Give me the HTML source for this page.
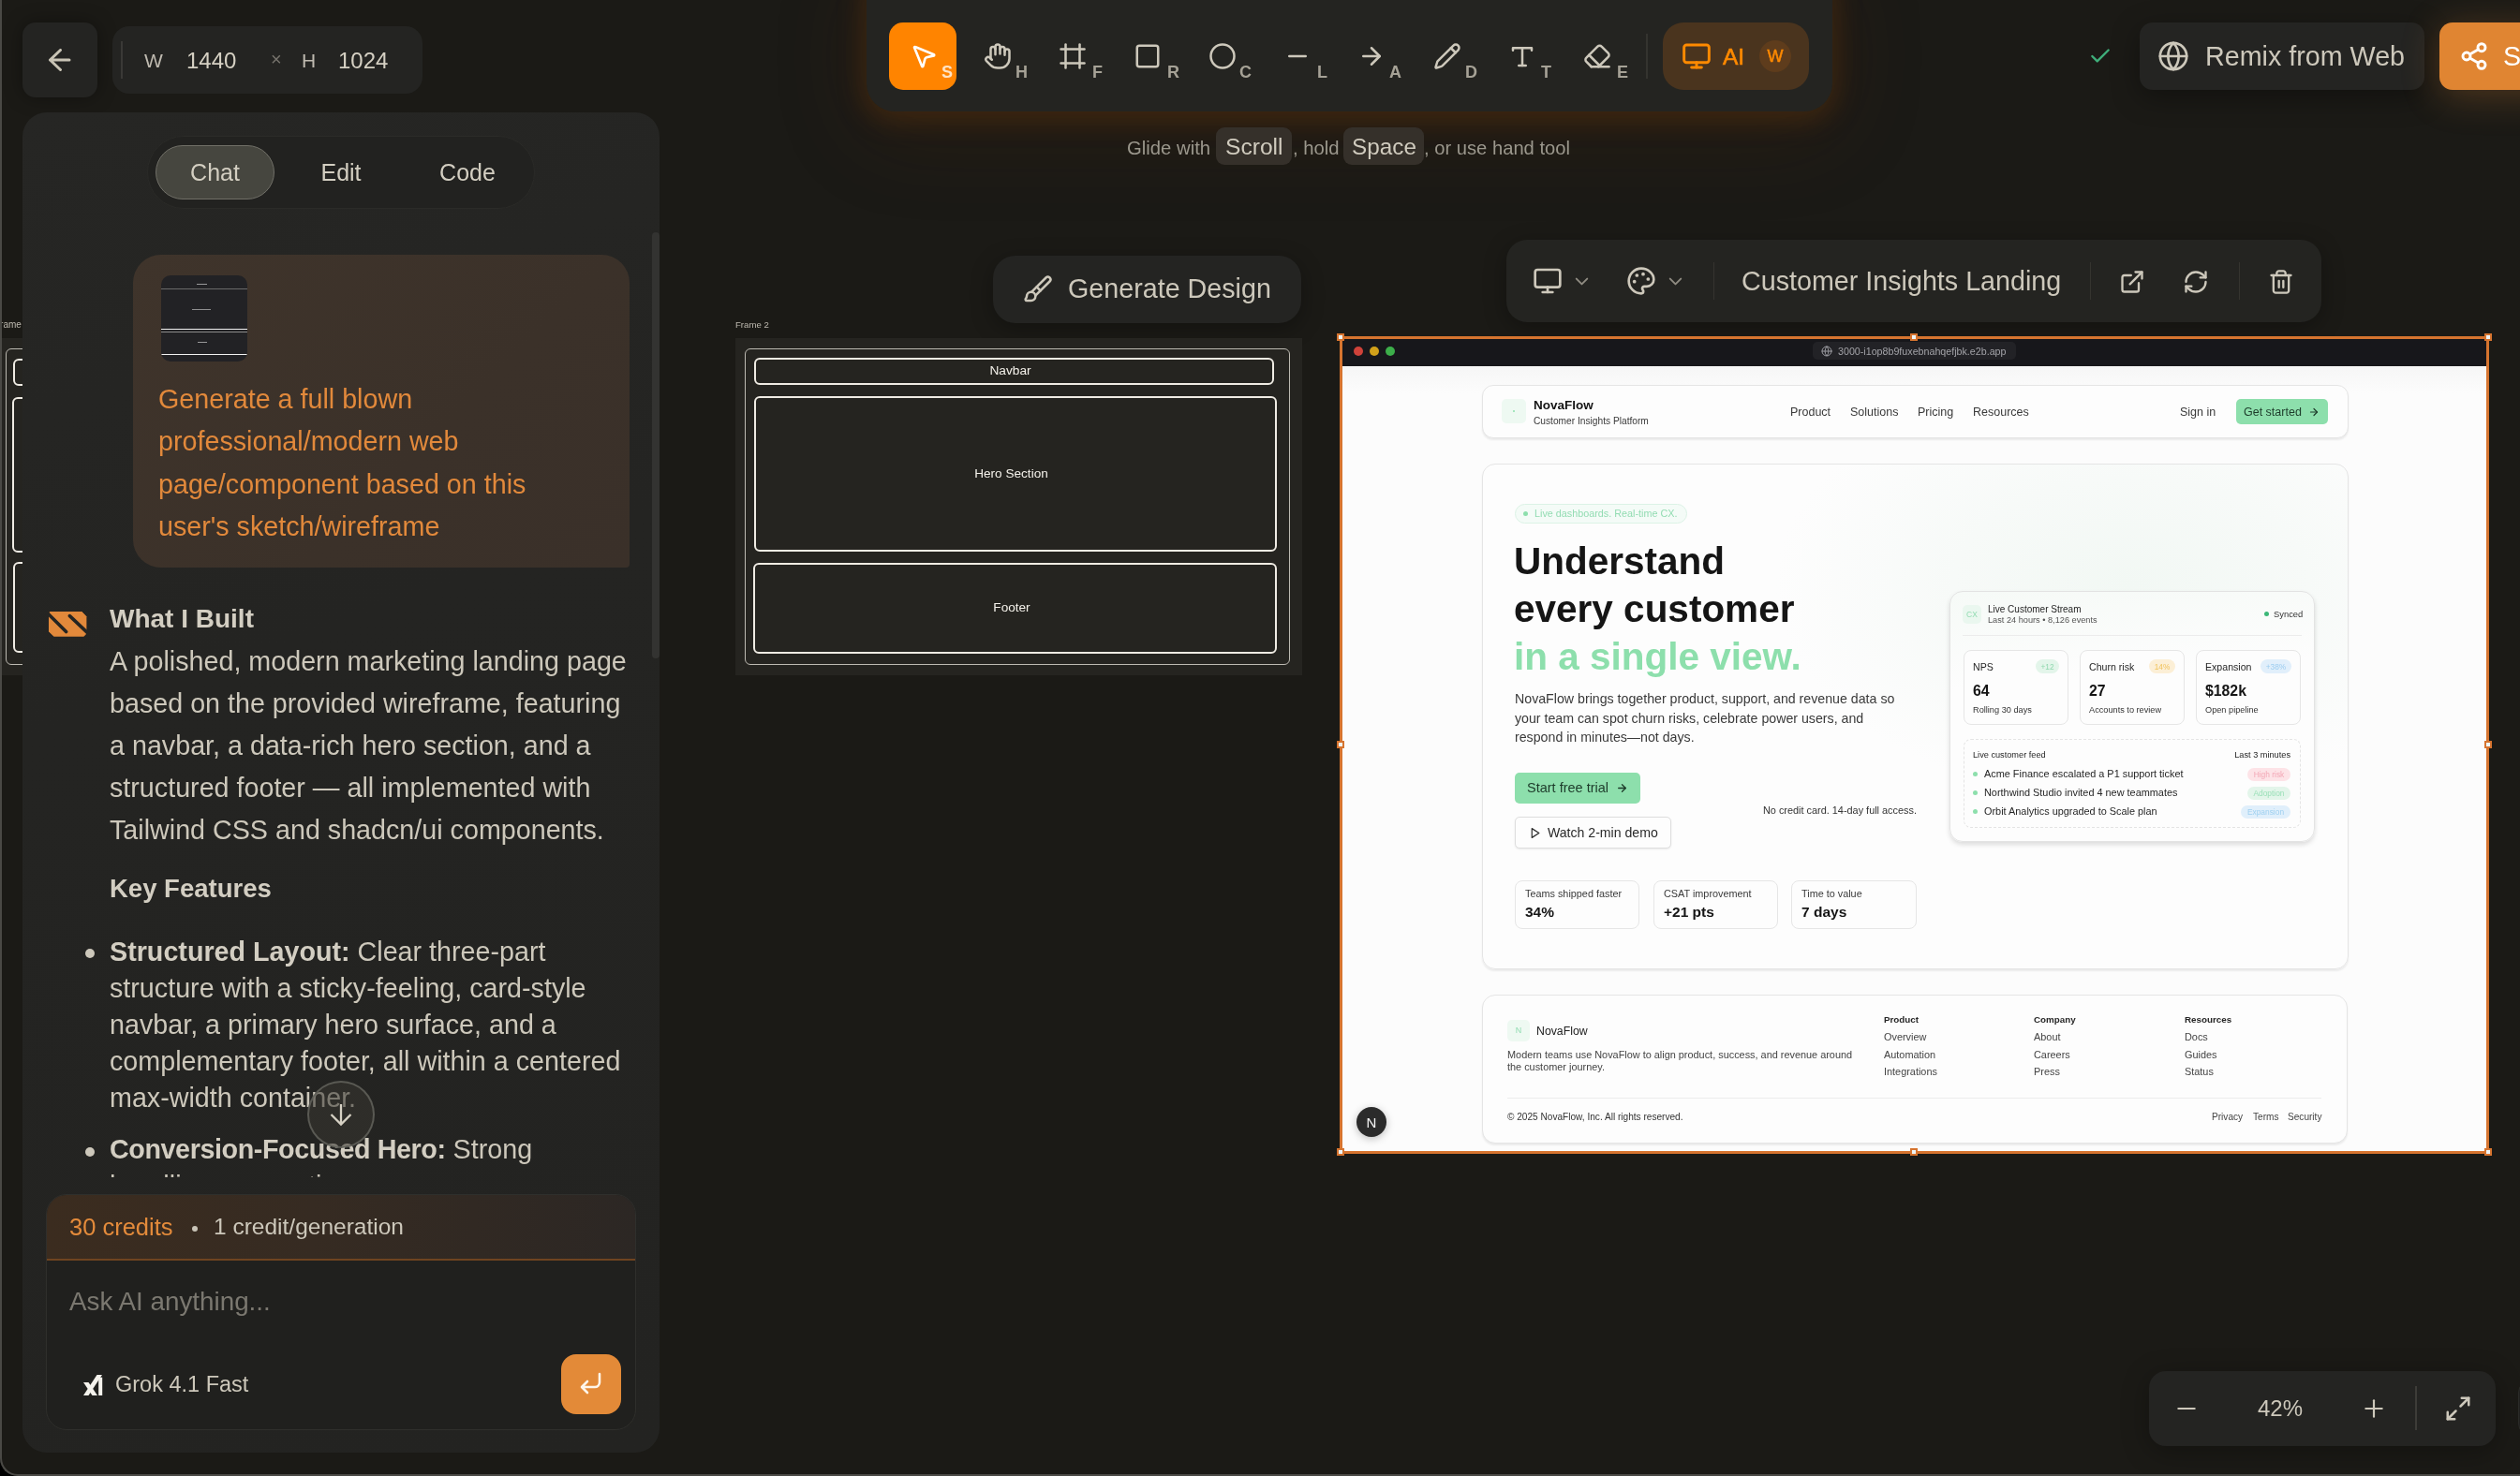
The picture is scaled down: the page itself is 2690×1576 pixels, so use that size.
<!DOCTYPE html>
<html><head><meta charset="utf-8">
<style>
*{box-sizing:border-box;margin:0;padding:0}
html,body{width:2690px;height:1576px;overflow:hidden;-webkit-font-smoothing:antialiased;background:#1b1a16;font-family:"Liberation Sans",sans-serif;color:#cdc8bb}
.a{position:absolute}
svg{display:block}
#win{position:absolute;left:0;top:-30px;width:2720px;height:1606px;border:2px solid #4a4945;border-top:none;border-right:none;border-radius:0 0 0 19px;pointer-events:none;z-index:50;box-shadow:0 0 0 60px #000}
.btn{background:#242422;border-radius:14px}
</style></head>
<body>
<div id="root" style="position:absolute;left:0;top:0;width:2690px;height:1576px;will-change:transform">
<div id="win"></div>
<div class="a" style="left:2688px;top:1473px;width:30px;height:61px;border-radius:14px;background:#222220;border:1px solid #2c2c29"></div>

<!-- ===== LEFT CANVAS FRAME (partially hidden) ===== -->
<div class="a" style="left:-6px;top:341px;font-size:10px;line-height:12px;color:#bdb9af;white-space:nowrap">Frame 1</div>
<div class="a" style="left:-4px;top:361px;width:605px;height:360px;background:#252420">
  <div class="a" style="left:10px;top:11px;width:582px;height:338px;border:1px solid #bdbab2;border-radius:6px"></div>
  <div class="a" style="left:18px;top:22px;width:555px;height:29px;border:2px solid #efebe3;border-radius:6px"></div>
  <div class="a" style="left:17px;top:63px;width:558px;height:166px;border:2px solid #efebe3;border-radius:6px"></div>
  <div class="a" style="left:18px;top:239px;width:559px;height:97px;border:2px solid #efebe3;border-radius:6px"></div>
</div>

<!-- ===== CANVAS ===== -->
<div class="a btn" style="left:1060px;top:273px;width:329px;height:72px;border-radius:24px;box-shadow:0 6px 24px rgba(0,0,0,.3)"></div>
<svg class="a" style="left:1092px;top:292.5px" width="32" height="32" viewBox="0 0 24 24" fill="none" stroke="#cdc8bb" stroke-width="1.9" stroke-linecap="round" stroke-linejoin="round"><path d="M9.969 17.031 21.378 5.624a1 1 0 0 0-3.002-3.002L6.967 14.031"/><path d="m11 10 3 3"/><path d="M6.5 21A3.5 3.5 0 1 0 3 17.5a2.62 2.62 0 0 1-.708 1.792A1 1 0 0 0 3 21z"/></svg>
<div class="a" style="left:1140px;top:292px;font-size:28.7px;color:#cdc8bb;white-space:nowrap;line-height:32px">Generate Design</div>
<div class="a" style="left:785px;top:340px;font-size:9.6px;color:#bdb9af;white-space:nowrap;line-height:14px">Frame 2</div>
<div class="a" style="left:785px;top:361px;width:605px;height:360px;background:#252420">
  <div class="a" style="left:10px;top:11px;width:582px;height:338px;border:1px solid #bdbab2;border-radius:6px"></div>
  <div class="a" style="left:20px;top:21px;width:555px;height:29px;border:2px solid #efebe3;border-radius:6px"></div>
  <div class="a" style="left:20px;top:21px;width:555px;height:29px;text-align:center;font-size:13.7px;line-height:27px;color:#f4f1ea;text-indent:-8px">Navbar</div>
  <div class="a" style="left:20px;top:62px;width:558px;height:166px;border:2px solid #efebe3;border-radius:6px"></div>
  <div class="a" style="left:20px;top:62px;width:558px;height:166px;text-align:center;font-size:13.6px;line-height:165px;color:#f4f1ea;text-indent:-9px">Hero Section</div>
  <div class="a" style="left:19px;top:240px;width:559px;height:97px;border:2px solid #efebe3;border-radius:6px"></div>
  <div class="a" style="left:19px;top:240px;width:559px;height:97px;text-align:center;font-size:13.6px;line-height:95px;color:#f4f1ea;text-indent:-7px">Footer</div>
</div>
<div class="a" style="left:1608px;top:256px;width:870px;height:88px;border-radius:22px;background:#242421;box-shadow:0 6px 24px rgba(0,0,0,.3)"></div>
<svg class="a" style="left:1636.3px;top:284.3px" width="32" height="32" viewBox="0 0 24 24" fill="none" stroke="#cdc8bb" stroke-width="2.0" stroke-linecap="round" stroke-linejoin="round"><rect width="20" height="14" x="2" y="3" rx="2"/><line x1="8" x2="16" y1="21" y2="21"/><line x1="12" x2="12" y1="17" y2="21"/></svg>
<svg class="a" style="left:1676.9px;top:288.7px" width="23" height="23" viewBox="0 0 24 24" fill="none" stroke="#8f8b81" stroke-width="2.0" stroke-linecap="round" stroke-linejoin="round"><path d="m6 9 6 6 6-6"/></svg>
<svg class="a" style="left:1736px;top:284.3px" width="32" height="32" viewBox="0 0 24 24" fill="none" stroke="#cdc8bb" stroke-width="2.0" stroke-linecap="round" stroke-linejoin="round"><circle cx="13.5" cy="6.5" r="1.4" fill="#cdc8bb" stroke="none"/><circle cx="17.5" cy="10.5" r="1.4" fill="#cdc8bb" stroke="none"/><circle cx="8.5" cy="7.5" r="1.4" fill="#cdc8bb" stroke="none"/><circle cx="6.5" cy="12.5" r="1.4" fill="#cdc8bb" stroke="none"/><path d="M12 2C6.5 2 2 6.5 2 12s4.5 10 10 10c.926 0 1.648-.746 1.648-1.688 0-.437-.18-.835-.437-1.125-.29-.289-.438-.652-.438-1.125a1.64 1.64 0 0 1 1.668-1.668h1.996c3.051 0 5.555-2.503 5.555-5.554C21.965 6.012 17.461 2 12 2z"/></svg>
<svg class="a" style="left:1776.8px;top:288.7px" width="23" height="23" viewBox="0 0 24 24" fill="none" stroke="#8f8b81" stroke-width="2.0" stroke-linecap="round" stroke-linejoin="round"><path d="m6 9 6 6 6-6"/></svg>
<div class="a" style="left:1828.5px;top:280px;width:1.5px;height:40px;background:#35342f"></div>
<div class="a" style="left:1859px;top:284px;font-size:28.7px;color:#cdc8bb;white-space:nowrap;line-height:32px">Customer Insights Landing</div>
<div class="a" style="left:2230.5px;top:280px;width:1.5px;height:40px;background:#35342f"></div>
<svg class="a" style="left:2262.4px;top:286.5px" width="28" height="28" viewBox="0 0 24 24" fill="none" stroke="#cdc8bb" stroke-width="2" stroke-linecap="round" stroke-linejoin="round"><path d="M15 3h6v6"/><path d="M10 14 21 3"/><path d="M18 13v6a2 2 0 0 1-2 2H5a2 2 0 0 1-2-2V8a2 2 0 0 1 2-2h6"/></svg>
<svg class="a" style="left:2330.3px;top:286.5px" width="28" height="28" viewBox="0 0 24 24" fill="none" stroke="#cdc8bb" stroke-width="2" stroke-linecap="round" stroke-linejoin="round"><path d="M3 12a9 9 0 0 1 9-9 9.75 9.75 0 0 1 6.74 2.74L21 8"/><path d="M21 3v5h-5"/><path d="M21 12a9 9 0 0 1-9 9 9.75 9.75 0 0 1-6.74-2.74L3 16"/><path d="M8 16H3v5"/></svg>
<div class="a" style="left:2389.5px;top:280px;width:1.5px;height:40px;background:#35342f"></div>
<svg class="a" style="left:2420.5px;top:286.5px" width="28" height="28" viewBox="0 0 24 24" fill="none" stroke="#cdc8bb" stroke-width="2" stroke-linecap="round" stroke-linejoin="round"><path d="M3 6h18"/><path d="M19 6v14c0 1-1 2-2 2H7c-1 0-2-1-2-2V6"/><path d="M8 6V4c0-1 1-2 2-2h4c1 0 2 1 2 2v2"/><line x1="10" x2="10" y1="11" y2="17"/><line x1="14" x2="14" y1="11" y2="17"/></svg>
<div class="a btn" style="left:2294px;top:1464px;width:370px;height:80px;border-radius:18px;box-shadow:0 6px 30px rgba(0,0,0,.3)"></div>
<svg class="a" style="left:2321.0px;top:1491.0px" width="26" height="26" viewBox="0 0 24 24" fill="none" stroke="#cdc8bb" stroke-width="2" stroke-linecap="round" stroke-linejoin="round"><path d="M4 12h16"/></svg>
<div class="a" style="left:2394px;top:1488px;width:80px;text-align:center;font-size:24px;color:#cdc8bb;line-height:32px">42%</div>
<svg class="a" style="left:2521.0px;top:1491.0px" width="26" height="26" viewBox="0 0 24 24" fill="none" stroke="#cdc8bb" stroke-width="2" stroke-linecap="round" stroke-linejoin="round"><path d="M4 12h16"/><path d="M12 4v16"/></svg>
<div class="a" style="left:2578px;top:1480px;width:2px;height:47px;background:#3d3c38"></div>
<svg class="a" style="left:2609.0px;top:1489.0px" width="30" height="30" viewBox="0 0 24 24" fill="none" stroke="#cdc8bb" stroke-width="2" stroke-linecap="round" stroke-linejoin="round"><path d="M15 3h6v6"/><path d="M9 21H3v-6"/><path d="M21 3l-7 7"/><path d="M3 21l7-7"/></svg>
<!-- PREVIEW -->
<div class="a" style="left:1430px;top:359px;width:1227px;height:873px;background:#fcfcfc;border:3px solid #d6742f"></div>
<div class="a" style="left:1433px;top:362px;width:1221px;height:29px;background:#17171b"></div>
<div class="a" style="left:1445px;top:370px;width:10px;height:10px;background:#cf423a;border-radius:5px"></div>
<div class="a" style="left:1462px;top:370px;width:10px;height:10px;background:#d1a01a;border-radius:5px"></div>
<div class="a" style="left:1479px;top:370px;width:10px;height:10px;background:#3cae4a;border-radius:5px"></div>
<div class="a" style="left:1935px;top:365px;width:217px;height:19px;background:#222226;border-radius:5px"></div>
<svg class="a" style="left:1944.0px;top:369.0px" width="12" height="12" viewBox="0 0 24 24" fill="none" stroke="#9c9ca2" stroke-width="2" stroke-linecap="round" stroke-linejoin="round"><circle cx="12" cy="12" r="10"/><path d="M12 2a14.5 14.5 0 0 0 0 20 14.5 14.5 0 0 0 0-20"/><path d="M2 12h20"/></svg>
<div class="a" style="left:1962.0px;top:369.9px;font-size:10.7px;line-height:10.7px;color:#a3a3a8;white-space:nowrap;">3000-i1op8b9fuxebnahqefjbk.e2b.app</div>
<div class="a" style="left:1433px;top:391px;width:1221px;height:29px;background:linear-gradient(#f6f6f6,#fcfcfc)"></div>
<div class="a" style="left:1582px;top:411px;width:925px;height:57px;background:#fdfdfd;border:1px solid #e5e5e5;border-radius:12px;box-shadow:0 2px 2px rgba(0,0,0,.07)"></div>
<div class="a" style="left:1603px;top:426px;width:26px;height:26px;background:#eef9f2;border-radius:5px"></div>
<div class="a" style="left:1615px;top:438px;width:2px;height:2px;background:#8ddfac;border-radius:1px"></div>
<div class="a" style="left:1637.0px;top:426.1px;font-size:13.5px;line-height:13.5px;color:#141414;white-space:nowrap;font-weight:700;">NovaFlow</div>
<div class="a" style="left:1637.0px;top:445.4px;font-size:10.2px;line-height:10.2px;color:#3a3a3a;white-space:nowrap;">Customer Insights Platform</div>
<div class="a" style="left:1911.0px;top:433.9px;font-size:12.5px;line-height:12.5px;color:#3a3a3a;white-space:nowrap;">Product</div>
<div class="a" style="left:1975.0px;top:433.9px;font-size:12.5px;line-height:12.5px;color:#3a3a3a;white-space:nowrap;">Solutions</div>
<div class="a" style="left:2047.0px;top:433.9px;font-size:12.5px;line-height:12.5px;color:#3a3a3a;white-space:nowrap;">Pricing</div>
<div class="a" style="left:2106.0px;top:433.9px;font-size:12.5px;line-height:12.5px;color:#3a3a3a;white-space:nowrap;">Resources</div>
<div class="a" style="left:2327.0px;top:433.9px;font-size:12.5px;line-height:12.5px;color:#3a3a3a;white-space:nowrap;">Sign in</div>
<div class="a" style="left:2387px;top:426px;width:98px;height:27px;background:#8ddfac;border-radius:5px"></div>
<div class="a" style="left:2395.0px;top:433.9px;font-size:12.5px;line-height:12.5px;color:#1d3b2a;white-space:nowrap;">Get started</div>
<svg class="a" style="left:2464.0px;top:433.5px" width="12" height="12" viewBox="0 0 24 24" fill="none" stroke="#1d3b2a" stroke-width="2.4" stroke-linecap="round" stroke-linejoin="round"><path d="M5 12h14"/><path d="m12 5 7 7-7 7"/></svg>
<div class="a" style="left:1582px;top:495px;width:925px;height:540px;background:radial-gradient(ellipse 380px 230px at 75% 24%,#f2f8f4 0%,#f7faf8 50%,#fdfdfd 100%);border:1px solid #e5e5e5;border-radius:14px;box-shadow:0 2px 2px rgba(0,0,0,.07)"></div>
<div class="a" style="left:1617px;top:538px;width:184px;height:21px;background:#f4fbf7;border:1px solid #dcf3e6;border-radius:11px"></div>
<div class="a" style="left:1626px;top:546px;width:5px;height:5px;background:#8ddfac;border-radius:3px"></div>
<div class="a" style="left:1638.0px;top:543.4px;font-size:10.8px;line-height:10.8px;color:#92dcb2;white-space:nowrap;">Live dashboards. Real-time CX.</div>
<div class="a" style="left:1616.0px;top:578.7px;font-size:40.5px;line-height:40.5px;color:#151515;white-space:nowrap;font-weight:700;">Understand</div>
<div class="a" style="left:1616.0px;top:630.2px;font-size:40.5px;line-height:40.5px;color:#151515;white-space:nowrap;font-weight:700;">every customer</div>
<div class="a" style="left:1616.0px;top:680.7px;font-size:40.5px;line-height:40.5px;color:#8ddfac;white-space:nowrap;font-weight:700;">in a single view.</div>
<div class="a" style="left:1617.0px;top:739.0px;font-size:14.2px;line-height:14.2px;color:#3a3a3a;white-space:nowrap;">NovaFlow brings together product, support, and revenue data so</div>
<div class="a" style="left:1617.0px;top:759.5px;font-size:14.2px;line-height:14.2px;color:#3a3a3a;white-space:nowrap;">your team can spot churn risks, celebrate power users, and</div>
<div class="a" style="left:1617.0px;top:779.5px;font-size:14.2px;line-height:14.2px;color:#3a3a3a;white-space:nowrap;">respond in minutes—not days.</div>
<div class="a" style="left:1617px;top:825px;width:134px;height:33px;background:#8ddfac;border-radius:5px"></div>
<div class="a" style="left:1630.0px;top:833.7px;font-size:14.5px;line-height:14.5px;color:#1d3b2a;white-space:nowrap;">Start free trial</div>
<svg class="a" style="left:1724.5px;top:835.0px" width="13" height="13" viewBox="0 0 24 24" fill="none" stroke="#1d3b2a" stroke-width="2.4" stroke-linecap="round" stroke-linejoin="round"><path d="M5 12h14"/><path d="m12 5 7 7-7 7"/></svg>
<div class="a" style="right:644.0px;top:859.8px;font-size:10.9px;line-height:10.9px;color:#333;white-space:nowrap;text-align:right;">No credit card. 14-day full access.</div>
<div class="a" style="left:1617px;top:872px;width:167px;height:34px;background:#fdfdfd;border:1px solid #dedede;border-radius:5px;box-shadow:0 1px 2px rgba(0,0,0,.08)"></div>
<svg class="a" style="left:1631.5px;top:882.5px" width="13" height="13" viewBox="0 0 24 24" fill="none" stroke="#2a2a2a" stroke-width="2.2" stroke-linecap="round" stroke-linejoin="round"><polygon points="6 3 20 12 6 21 6 3"/></svg>
<div class="a" style="left:1652.0px;top:882.1px;font-size:14.1px;line-height:14.1px;color:#2a2a2a;white-space:nowrap;">Watch 2-min demo</div>
<div class="a" style="left:1617px;top:940px;width:133px;height:52px;background:#fdfdfd;border:1px solid #e6e6e6;border-radius:8px"></div>
<div class="a" style="left:1628.0px;top:948.8px;font-size:10.85px;line-height:10.85px;color:#3a3a3a;white-space:nowrap;">Teams shipped faster</div>
<div class="a" style="left:1628.0px;top:966.4px;font-size:15.5px;line-height:15.5px;color:#151515;white-space:nowrap;font-weight:700;">34%</div>
<div class="a" style="left:1765px;top:940px;width:133px;height:52px;background:#fdfdfd;border:1px solid #e6e6e6;border-radius:8px"></div>
<div class="a" style="left:1776.0px;top:948.8px;font-size:10.85px;line-height:10.85px;color:#3a3a3a;white-space:nowrap;">CSAT improvement</div>
<div class="a" style="left:1776.0px;top:966.4px;font-size:15.5px;line-height:15.5px;color:#151515;white-space:nowrap;font-weight:700;">+21 pts</div>
<div class="a" style="left:1912px;top:940px;width:134px;height:52px;background:#fdfdfd;border:1px solid #e6e6e6;border-radius:8px"></div>
<div class="a" style="left:1923.0px;top:948.8px;font-size:10.85px;line-height:10.85px;color:#3a3a3a;white-space:nowrap;">Time to value</div>
<div class="a" style="left:1923.0px;top:966.4px;font-size:15.5px;line-height:15.5px;color:#151515;white-space:nowrap;font-weight:700;">7 days</div>
<div class="a" style="left:2081px;top:631px;width:390px;height:268px;background:linear-gradient(175deg,#f6faf7 0%,#fdfdfd 35%);border:1px solid #e3e3e3;border-radius:14px;box-shadow:0 3px 5px rgba(0,0,0,.13)"></div>
<div class="a" style="left:2095px;top:646px;width:20px;height:20px;background:#eaf7ef;border-radius:5px"></div>
<div class="a" style="left:2095.0px;width:20px;text-align:center;top:651.8px;font-size:8.5px;line-height:8.5px;color:#92dcb2;white-space:nowrap;">CX</div>
<div class="a" style="left:2122.0px;top:646.0px;font-size:10px;line-height:10px;color:#262626;white-space:nowrap;">Live Customer Stream</div>
<div class="a" style="left:2122.0px;top:657.7px;font-size:9.2px;line-height:9.2px;color:#555;white-space:nowrap;">Last 24 hours • 8,126 events</div>
<div class="a" style="left:2417px;top:653px;width:5px;height:5px;background:#3cb878;border-radius:3px"></div>
<div class="a" style="left:2427.0px;top:651.0px;font-size:9.4px;line-height:9.4px;color:#333;white-space:nowrap;">Synced</div>
<div class="a" style="left:2095px;top:678px;width:362px;height:1px;background:#ececec"></div>
<div class="a" style="left:2096px;top:694px;width:112px;height:80px;background:#fdfdfd;border:1px solid #e6e6e6;border-radius:8px"></div>
<div class="a" style="left:2106.0px;top:706.5px;font-size:10.6px;line-height:10.6px;color:#262626;white-space:nowrap;">NPS</div>
<div class="a" style="left:2173px;top:704px;width:25px;height:15px;background:#e3f5ea;border-radius:8px"></div>
<div class="a" style="left:2173.0px;width:25px;text-align:center;top:708.0px;font-size:8.3px;line-height:8.3px;color:#8fd8ae;white-space:nowrap;">+12</div>
<div class="a" style="left:2106.0px;top:730.1px;font-size:15.8px;line-height:15.8px;color:#151515;white-space:nowrap;font-weight:700;">64</div>
<div class="a" style="left:2106.0px;top:754.2px;font-size:9.2px;line-height:9.2px;color:#333;white-space:nowrap;">Rolling 30 days</div>
<div class="a" style="left:2220px;top:694px;width:112px;height:80px;background:#fdfdfd;border:1px solid #e6e6e6;border-radius:8px"></div>
<div class="a" style="left:2230.0px;top:706.5px;font-size:10.6px;line-height:10.6px;color:#262626;white-space:nowrap;">Churn risk</div>
<div class="a" style="left:2294px;top:704px;width:28px;height:15px;background:#fcefd6;border-radius:8px"></div>
<div class="a" style="left:2294.0px;width:28px;text-align:center;top:708.0px;font-size:8.3px;line-height:8.3px;color:#f0c35c;white-space:nowrap;">14%</div>
<div class="a" style="left:2230.0px;top:730.1px;font-size:15.8px;line-height:15.8px;color:#151515;white-space:nowrap;font-weight:700;">27</div>
<div class="a" style="left:2230.0px;top:754.2px;font-size:9.2px;line-height:9.2px;color:#333;white-space:nowrap;">Accounts to review</div>
<div class="a" style="left:2344px;top:694px;width:112px;height:80px;background:#fdfdfd;border:1px solid #e6e6e6;border-radius:8px"></div>
<div class="a" style="left:2354.0px;top:706.5px;font-size:10.6px;line-height:10.6px;color:#262626;white-space:nowrap;">Expansion</div>
<div class="a" style="left:2413px;top:704px;width:33px;height:15px;background:#e1effb;border-radius:8px"></div>
<div class="a" style="left:2413.0px;width:33px;text-align:center;top:708.0px;font-size:8.3px;line-height:8.3px;color:#9ccdf0;white-space:nowrap;">+38%</div>
<div class="a" style="left:2354.0px;top:730.1px;font-size:15.8px;line-height:15.8px;color:#151515;white-space:nowrap;font-weight:700;">$182k</div>
<div class="a" style="left:2354.0px;top:754.2px;font-size:9.2px;line-height:9.2px;color:#333;white-space:nowrap;">Open pipeline</div>
<div class="a" style="left:2096px;top:789px;width:360px;height:95px;border:1px dashed #e4e4e4;border-radius:8px"></div>
<div class="a" style="left:2106.0px;top:801.7px;font-size:9.2px;line-height:9.2px;color:#262626;white-space:nowrap;">Live customer feed</div>
<div class="a" style="right:245.0px;top:801.7px;font-size:9.2px;line-height:9.2px;color:#262626;white-space:nowrap;text-align:right;">Last 3 minutes</div>
<div class="a" style="left:2106px;top:824.0px;width:5px;height:5.0px;background:#8ddfac;border-radius:3px"></div>
<div class="a" style="left:2118.0px;top:821.3px;font-size:10.9px;line-height:10.9px;color:#262626;white-space:nowrap;">Acme Finance escalated a P1 support ticket</div>
<div class="a" style="left:2399px;top:819.5px;width:46px;height:14.0px;background:#fde3e7;border-radius:7px"></div>
<div class="a" style="left:2399.0px;width:46px;text-align:center;top:822.9px;font-size:8.4px;line-height:8.4px;color:#f3a8b6;white-space:nowrap;">High risk</div>
<div class="a" style="left:2106px;top:844.0px;width:5px;height:5.0px;background:#8ddfac;border-radius:3px"></div>
<div class="a" style="left:2118.0px;top:841.3px;font-size:10.9px;line-height:10.9px;color:#262626;white-space:nowrap;">Northwind Studio invited 4 new teammates</div>
<div class="a" style="left:2399px;top:839.5px;width:46px;height:14.0px;background:#e3f5ea;border-radius:7px"></div>
<div class="a" style="left:2399.0px;width:46px;text-align:center;top:842.9px;font-size:8.4px;line-height:8.4px;color:#9be0b8;white-space:nowrap;">Adoption</div>
<div class="a" style="left:2106px;top:864.0px;width:5px;height:5.0px;background:#8ddfac;border-radius:3px"></div>
<div class="a" style="left:2118.0px;top:861.3px;font-size:10.9px;line-height:10.9px;color:#262626;white-space:nowrap;">Orbit Analytics upgraded to Scale plan</div>
<div class="a" style="left:2392px;top:859.5px;width:53px;height:14.0px;background:#e0effb;border-radius:7px"></div>
<div class="a" style="left:2392.0px;width:53px;text-align:center;top:862.9px;font-size:8.4px;line-height:8.4px;color:#9fd0f0;white-space:nowrap;">Expansion</div>
<div class="a" style="left:1582px;top:1062px;width:924px;height:159px;background:#fdfdfd;border:1px solid #e5e5e5;border-radius:14px;box-shadow:0 2px 2px rgba(0,0,0,.07)"></div>
<div class="a" style="left:1609px;top:1089px;width:24px;height:23px;background:#eef9f2;border-radius:5px"></div>
<div class="a" style="left:1609.0px;width:24px;text-align:center;top:1096.4px;font-size:9px;line-height:9px;color:#92dcb2;white-space:nowrap;">N</div>
<div class="a" style="left:1640.0px;top:1095.1px;font-size:12.3px;line-height:12.3px;color:#222;white-space:nowrap;">NovaFlow</div>
<div class="a" style="left:1609.0px;top:1121.3px;font-size:10.9px;line-height:10.9px;color:#444;white-space:nowrap;">Modern teams use NovaFlow to align product, success, and revenue around</div>
<div class="a" style="left:1609.0px;top:1134.3px;font-size:10.9px;line-height:10.9px;color:#444;white-space:nowrap;">the customer journey.</div>
<div class="a" style="left:2011.0px;top:1084.2px;font-size:9.8px;line-height:9.8px;color:#262626;white-space:nowrap;font-weight:700;">Product</div>
<div class="a" style="left:2011.0px;top:1102.3px;font-size:10.9px;line-height:10.9px;color:#444;white-space:nowrap;">Overview</div>
<div class="a" style="left:2011.0px;top:1121.3px;font-size:10.9px;line-height:10.9px;color:#444;white-space:nowrap;">Automation</div>
<div class="a" style="left:2011.0px;top:1138.8px;font-size:10.9px;line-height:10.9px;color:#444;white-space:nowrap;">Integrations</div>
<div class="a" style="left:2171.0px;top:1084.2px;font-size:9.8px;line-height:9.8px;color:#262626;white-space:nowrap;font-weight:700;">Company</div>
<div class="a" style="left:2171.0px;top:1102.3px;font-size:10.9px;line-height:10.9px;color:#444;white-space:nowrap;">About</div>
<div class="a" style="left:2171.0px;top:1121.3px;font-size:10.9px;line-height:10.9px;color:#444;white-space:nowrap;">Careers</div>
<div class="a" style="left:2171.0px;top:1138.8px;font-size:10.9px;line-height:10.9px;color:#444;white-space:nowrap;">Press</div>
<div class="a" style="left:2332.0px;top:1084.2px;font-size:9.8px;line-height:9.8px;color:#262626;white-space:nowrap;font-weight:700;">Resources</div>
<div class="a" style="left:2332.0px;top:1102.3px;font-size:10.9px;line-height:10.9px;color:#444;white-space:nowrap;">Docs</div>
<div class="a" style="left:2332.0px;top:1121.3px;font-size:10.9px;line-height:10.9px;color:#444;white-space:nowrap;">Guides</div>
<div class="a" style="left:2332.0px;top:1138.8px;font-size:10.9px;line-height:10.9px;color:#444;white-space:nowrap;">Status</div>
<div class="a" style="left:1609px;top:1172px;width:869px;height:1px;background:#ececec"></div>
<div class="a" style="left:1609.0px;top:1188.0px;font-size:10.1px;line-height:10.1px;color:#333;white-space:nowrap;">© 2025 NovaFlow, Inc. All rights reserved.</div>
<div class="a" style="left:2361.0px;top:1187.5px;font-size:10.1px;line-height:10.1px;color:#444;white-space:nowrap;">Privacy</div>
<div class="a" style="left:2405.0px;top:1187.5px;font-size:10.1px;line-height:10.1px;color:#444;white-space:nowrap;">Terms</div>
<div class="a" style="left:2442.0px;top:1187.5px;font-size:10.1px;line-height:10.1px;color:#444;white-space:nowrap;">Security</div>
<div class="a" style="left:1448px;top:1182px;width:32px;height:32px;background:#2b2b2b;border-radius:16px;box-shadow:0 2px 8px rgba(0,0,0,.25)"></div>
<div class="a" style="left:1448.0px;width:32px;text-align:center;top:1191.3px;font-size:15px;line-height:15px;color:#f5f5f5;white-space:nowrap;">N</div>
<div class="a" style="left:1427px;top:356px;width:8px;height:8px;background:#eef4f6;border:2.5px solid #d6742f"></div>
<div class="a" style="left:2039px;top:356px;width:8px;height:8px;background:#eef4f6;border:2.5px solid #d6742f"></div>
<div class="a" style="left:2652px;top:356px;width:8px;height:8px;background:#eef4f6;border:2.5px solid #d6742f"></div>
<div class="a" style="left:1427px;top:791px;width:8px;height:8px;background:#eef4f6;border:2.5px solid #d6742f"></div>
<div class="a" style="left:2652px;top:791px;width:8px;height:8px;background:#eef4f6;border:2.5px solid #d6742f"></div>
<div class="a" style="left:1427px;top:1226px;width:8px;height:8px;background:#eef4f6;border:2.5px solid #d6742f"></div>
<div class="a" style="left:2039px;top:1226px;width:8px;height:8px;background:#eef4f6;border:2.5px solid #d6742f"></div>
<div class="a" style="left:2652px;top:1226px;width:8px;height:8px;background:#eef4f6;border:2.5px solid #d6742f"></div>
<!-- END CANVAS -->
<!-- ===== TOOLBAR ===== -->
<div class="a" style="left:925px;top:-40px;width:1031px;height:159px;border-radius:30px;background:#242421;box-shadow:0 6px 28px 4px rgba(125,62,8,.32),0 20px 90px 10px rgba(90,45,5,.18)"></div>
<div class="a" style="left:949px;top:24px;width:72px;height:72px;border-radius:15px;background:#ff8400"></div>
<svg class="a" style="left:971.0px;top:45.0px" width="30" height="30" viewBox="0 0 24 24" fill="none" stroke="#ffffff" stroke-width="2.1" stroke-linecap="round" stroke-linejoin="round"><path d="M4.037 4.688a.495.495 0 0 1 .651-.651l16 6.5a.5.5 0 0 1-.063.947l-6.124 1.58a2 2 0 0 0-1.438 1.435l-1.579 6.126a.5.5 0 0 1-.947.063z"/></svg>
<div class="a" style="left:1005px;top:67px;font-size:18px;font-weight:700;color:#ffe3c4;line-height:20px">S</div>
<svg class="a" style="left:1050.0px;top:45.0px" width="30" height="30" viewBox="0 0 24 24" fill="none" stroke="#cdc8bb" stroke-width="2" stroke-linecap="round" stroke-linejoin="round"><path d="M18 11V6a2 2 0 0 0-2-2a2 2 0 0 0-2 2"/><path d="M14 10V4a2 2 0 0 0-2-2a2 2 0 0 0-2 2v2"/><path d="M10 10.5V6a2 2 0 0 0-2-2a2 2 0 0 0-2 2v8"/><path d="M18 8a2 2 0 1 1 4 0v6a8 8 0 0 1-8 8h-2c-2.8 0-4.5-.86-5.99-2.34l-3.6-3.6a2 2 0 0 1 2.83-2.82L7 15"/></svg>
<div class="a" style="left:1084px;top:67px;font-size:18px;font-weight:700;color:#a6a296;line-height:20px">H</div>
<svg class="a" style="left:1129.5px;top:45.0px" width="30" height="30" viewBox="0 0 24 24" fill="none" stroke="#cdc8bb" stroke-width="2" stroke-linecap="round" stroke-linejoin="round"><line x1="22" y1="6" x2="2" y2="6"/><line x1="22" y1="18" x2="2" y2="18"/><line x1="6" y1="2" x2="6" y2="22"/><line x1="18" y1="2" x2="18" y2="22"/></svg>
<div class="a" style="left:1166px;top:67px;font-size:18px;font-weight:700;color:#a6a296;line-height:20px">F</div>
<svg class="a" style="left:1210.0px;top:45.0px" width="30" height="30" viewBox="0 0 24 24" fill="none" stroke="#cdc8bb" stroke-width="2" stroke-linecap="round" stroke-linejoin="round"><rect width="18" height="18" x="3" y="3" rx="2"/></svg>
<div class="a" style="left:1246px;top:67px;font-size:18px;font-weight:700;color:#a6a296;line-height:20px">R</div>
<svg class="a" style="left:1289.6px;top:45.0px" width="30" height="30" viewBox="0 0 24 24" fill="none" stroke="#cdc8bb" stroke-width="2" stroke-linecap="round" stroke-linejoin="round"><circle cx="12" cy="12" r="10"/></svg>
<div class="a" style="left:1323px;top:67px;font-size:18px;font-weight:700;color:#a6a296;line-height:20px">C</div>
<svg class="a" style="left:1369.5px;top:45.0px" width="30" height="30" viewBox="0 0 24 24" fill="none" stroke="#cdc8bb" stroke-width="2" stroke-linecap="round" stroke-linejoin="round"><path d="M5 12h14"/></svg>
<div class="a" style="left:1406px;top:67px;font-size:18px;font-weight:700;color:#a6a296;line-height:20px">L</div>
<svg class="a" style="left:1449.0px;top:45.0px" width="30" height="30" viewBox="0 0 24 24" fill="none" stroke="#cdc8bb" stroke-width="2" stroke-linecap="round" stroke-linejoin="round"><path d="M5 12h14"/><path d="m12 5 7 7-7 7"/></svg>
<div class="a" style="left:1483px;top:67px;font-size:18px;font-weight:700;color:#a6a296;line-height:20px">A</div>
<svg class="a" style="left:1529.5px;top:45.0px" width="30" height="30" viewBox="0 0 24 24" fill="none" stroke="#cdc8bb" stroke-width="2" stroke-linecap="round" stroke-linejoin="round"><path d="M21.174 6.812a1 1 0 0 0-3.986-3.987L3.842 16.174a2 2 0 0 0-.5.83l-1.321 4.352a.5.5 0 0 0 .623.622l4.353-1.32a2 2 0 0 0 .83-.497z"/><path d="m15 5 4 4"/></svg>
<div class="a" style="left:1564px;top:67px;font-size:18px;font-weight:700;color:#a6a296;line-height:20px">D</div>
<svg class="a" style="left:1610.0px;top:45.0px" width="30" height="30" viewBox="0 0 24 24" fill="none" stroke="#cdc8bb" stroke-width="2" stroke-linecap="round" stroke-linejoin="round"><path d="M4 7V5h16v2"/><path d="M12 5v15"/><path d="M9 20h6"/></svg>
<div class="a" style="left:1645px;top:67px;font-size:18px;font-weight:700;color:#a6a296;line-height:20px">T</div>
<svg class="a" style="left:1690.0px;top:45.0px" width="30" height="30" viewBox="0 0 24 24" fill="none" stroke="#cdc8bb" stroke-width="2" stroke-linecap="round" stroke-linejoin="round"><path d="m7 21-4.3-4.3c-1-1-1-2.5 0-3.4l9.6-9.6c1-1 2.5-1 3.4 0l5.6 5.6c1 1 1 2.5 0 3.4L13 21"/><path d="M22 21H7"/><path d="m5 11 9 9"/></svg>
<div class="a" style="left:1726px;top:67px;font-size:18px;font-weight:700;color:#a6a296;line-height:20px">E</div>
<div class="a" style="left:1757px;top:36px;width:2px;height:48px;background:#34332f"></div>
<div class="a" style="left:1775px;top:24px;width:156px;height:72px;border-radius:22px;background:#4a341e"></div>
<svg class="a" style="left:1794.5px;top:44.0px" width="32" height="32" viewBox="0 0 24 24" fill="none" stroke="#ff8a00" stroke-width="2.2" stroke-linecap="round" stroke-linejoin="round"><rect width="20" height="14" x="2" y="3" rx="2"/><line x1="8" x2="16" y1="21" y2="21"/><line x1="12" x2="12" y1="17" y2="21"/></svg>
<div class="a" style="left:1839px;top:47px;font-size:24.5px;color:#ff8a00;line-height:28px;-webkit-text-stroke:.6px #ff8a00">AI</div>
<div class="a" style="left:1878px;top:43px;width:34px;height:34px;border-radius:17px;background:#5e3c1c;color:#ff8a00;font-size:18px;text-align:center;line-height:35px;-webkit-text-stroke:.5px #ff8a00">W</div>
<div class="a" style="left:1203px;top:147.8px;font-size:20.3px;line-height:20.3px;color:#9b978c;white-space:nowrap;">Glide with</div>
<div class="a" style="left:1298px;top:136px;width:81px;height:40px;border-radius:9px;background:#35302a"></div>
<div class="a" style="left:1308px;top:144.7px;font-size:24.6px;line-height:24.6px;color:#d0cbbe;white-space:nowrap;">Scroll</div>
<div class="a" style="left:1380px;top:147.8px;font-size:20.3px;line-height:20.3px;color:#9b978c;white-space:nowrap;">, hold</div>
<div class="a" style="left:1434px;top:136px;width:86px;height:40px;border-radius:9px;background:#35302a"></div>
<div class="a" style="left:1443px;top:144.9px;font-size:24.3px;line-height:24.3px;color:#d0cbbe;white-space:nowrap;">Space</div>
<div class="a" style="left:1520px;top:147.9px;font-size:20.2px;line-height:20.2px;color:#9b978c;white-space:nowrap;">, or use hand tool</div>
<svg class="a" style="left:2228.5px;top:47.0px" width="26" height="26" viewBox="0 0 24 24" fill="none" stroke="#3fae7a" stroke-width="2.2" stroke-linecap="round" stroke-linejoin="round"><path d="M20 6 9 17l-5-5"/></svg>
<div class="a btn" style="left:2284px;top:24px;width:304px;height:72px;box-shadow:0 8px 30px rgba(0,0,0,.35)"></div>
<svg class="a" style="left:2303.0px;top:43.0px" width="34" height="34" viewBox="0 0 24 24" fill="none" stroke="#cdc8bb" stroke-width="1.9" stroke-linecap="round" stroke-linejoin="round"><circle cx="12" cy="12" r="10"/><path d="M12 2a14.5 14.5 0 0 0 0 20 14.5 14.5 0 0 0 0-20"/><path d="M2 12h20"/></svg>
<div class="a" style="left:2354px;top:44px;font-size:28.7px;color:#cdc8bb;white-space:nowrap;line-height:32px">Remix from Web</div>
<div class="a" style="left:2604px;top:24px;width:200px;height:72px;border-radius:14px;background:#e08532;box-shadow:0 6px 40px rgba(224,133,50,.28)"></div>
<svg class="a" style="left:2624.5px;top:44.0px" width="32" height="32" viewBox="0 0 24 24" fill="none" stroke="#ffffff" stroke-width="2.2" stroke-linecap="round" stroke-linejoin="round"><circle cx="18" cy="5" r="3"/><circle cx="6" cy="12" r="3"/><circle cx="18" cy="19" r="3"/><line x1="8.59" x2="15.42" y1="13.51" y2="17.49"/><line x1="15.41" x2="8.59" y1="6.51" y2="10.49"/></svg>
<div class="a" style="left:2672px;top:44px;font-size:28.7px;color:#ffffff;white-space:nowrap;line-height:32px">Share</div>
<!-- END TOOLBAR -->
<!-- ===== TOP LEFT CONTROLS ===== -->
<div class="a btn" style="left:24px;top:24px;width:80px;height:80px;box-shadow:0 0 20px rgba(0,0,0,.35)">
  <svg class="a" style="left:28px;top:28px" width="24" height="24" viewBox="0 0 24 24" fill="none" stroke="#c9c4b5" stroke-width="3" stroke-linecap="round" stroke-linejoin="round"><path d="M22 12H1.5M12.5 1.5L1.5 12l11 10.5"/></svg>
</div>
<div class="a btn" style="left:120px;top:28px;width:331px;height:72px;border-radius:18px">
  <div class="a" style="left:9px;top:16px;width:2px;height:40px;background:#3a3936"></div>
  <div class="a" style="left:34px;top:25.7px;font-size:21px;line-height:21px;color:#bfbab0">W</div>
  <div class="a" style="left:79px;top:25.2px;font-size:24px;line-height:24px;color:#d5d0c3">1440</div>
  <div class="a" style="left:169px;top:25px;font-size:20px;line-height:20px;color:#77746d">×</div>
  <div class="a" style="left:202px;top:25.7px;font-size:21px;line-height:21px;color:#bfbab0">H</div>
  <div class="a" style="left:241px;top:25.2px;font-size:24px;line-height:24px;color:#d5d0c3">1024</div>
</div>

<!-- ===== LEFT PANEL ===== -->
<div id="panel" class="a" style="left:24px;top:120px;width:680px;height:1431px;background:linear-gradient(160deg,#262624 0%,#242422 40%,#232321 100%);border-radius:26px;overflow:hidden">
  <!-- tabs -->
  <div class="a" style="left:133px;top:25px;width:414px;height:78px;border-radius:39px;background:#222220;border:1px solid #2b2b28"></div>
  <div class="a" style="left:142px;top:35px;width:127px;height:58px;border-radius:29px;background:#46463f;border:1.5px solid #706f67"></div>
  <div class="a" style="left:142px;top:50px;width:127px;text-align:center;font-size:25px;color:#d3cec1">Chat</div>
  <div class="a" style="left:290px;top:50px;width:100px;text-align:center;font-size:25px;color:#d3cec1">Edit</div>
  <div class="a" style="left:425px;top:50px;width:100px;text-align:center;font-size:25px;color:#d3cec1">Code</div>

  <!-- scrollbar -->
  <div class="a" style="left:672px;top:128px;width:8px;height:455px;border-radius:4px;background:#333331"></div>

  <!-- content clip -->
  <div class="a" style="left:0;top:120px;width:672px;height:1017px;overflow:hidden">
    <div class="a" style="left:0;top:-120px;width:672px;height:1300px">
    <!-- bubble -->
    <div class="a" style="left:118px;top:152px;width:530px;height:334px;border-radius:30px 30px 4px 30px;background:linear-gradient(135deg,#3f342b 0%,#3b3129 60%,#3a3029 100%)">
      <div class="a" style="left:30px;top:22px;width:92px;height:92px;border-radius:10px;background:#222225;overflow:hidden">
        <div class="a" style="left:38px;top:8.8px;width:11px;height:1.4px;background:#e8e8e8;opacity:.6"></div>
        <div class="a" style="left:0;top:14px;width:92px;height:1px;background:#6a6a6a"></div>
        <div class="a" style="left:33px;top:36px;width:20px;height:1.4px;background:#e8e8e8;opacity:.55"></div>
        <div class="a" style="left:0;top:56.5px;width:92px;height:1.6px;background:#f2f2f2"></div>
        <div class="a" style="left:0;top:59.8px;width:92px;height:1px;background:#8a8a8a"></div>
        <div class="a" style="left:39px;top:70.8px;width:10px;height:1.4px;background:#e8e8e8;opacity:.6"></div>
        <div class="a" style="left:0;top:83.7px;width:92px;height:1.6px;background:#f2f2f2"></div>
      </div>
      <div class="a" style="left:27px;top:132px;width:500px;font-size:28.7px;line-height:45.4px;color:#e2893b">Generate a full blown<br>professional/modern web<br>page/component based on this<br>user's sketch/wireframe</div>
    </div>

    <!-- What I built -->
    <svg class="a" style="left:28px;top:532.7px" width="41" height="27" viewBox="0 0 41 27"><polygon points="1.5,0 35,0 40,5.2 40,23.5 37.5,26.3 5.5,26.3 0,21 0,3" fill="#e2893b" stroke="#e2893b" stroke-width="0.8" stroke-linejoin="round"/><path d="M-2 1 L18.6 21.5" stroke="#242422" stroke-width="3.6" stroke-linecap="round"/><path d="M22.4 4.6 L44 25" stroke="#242422" stroke-width="3.6" stroke-linecap="round"/></svg>
    <div class="a" style="left:93px;top:525px;font-size:28px;font-weight:700;color:#d3cec2;white-space:nowrap">What I Built</div>
    <div class="a" style="left:93px;top:563.8px;width:570px;font-size:28.7px;line-height:45px;color:#cdc8bb">A polished, modern marketing landing page<br>based on the provided wireframe, featuring<br>a navbar, a data-rich hero section, and a<br>structured footer — all implemented with<br>Tailwind CSS and shadcn/ui components.</div>
    <div class="a" style="left:93px;top:813px;font-size:27.5px;font-weight:700;color:#d3cec2;white-space:nowrap">Key Features</div>
    <div class="a" style="left:67px;top:893px;width:10px;height:10px;border-radius:5px;background:#cdc8bb"></div>
    <div class="a" style="left:93px;top:876.6px;width:575px;font-size:28.7px;line-height:39px;color:#cdc8bb"><b style="color:#d3cec2">Structured Layout:</b> Clear three-part<br>structure with a sticky-feeling, card-style<br>navbar, a primary hero surface, and a<br>complementary footer, all within a centered<br>max-width container.</div>
    <div class="a" style="left:67px;top:1105px;width:10px;height:10px;border-radius:5px;background:#cdc8bb"></div>
    <div class="a" style="left:93px;top:1087.6px;width:575px;font-size:28.7px;line-height:39px;color:#cdc8bb"><b style="color:#d3cec2;letter-spacing:-.4px">Conversion-Focused Hero:</b> Strong<br>headline, supporting copy</div>
    </div>
  </div>

  <!-- scroll down button -->
  <div class="a" style="left:304px;top:1034px;width:72px;height:72px;border-radius:36px;background:rgba(56,54,50,.55);border:2px solid rgba(98,97,90,.85)">
    <svg class="a" style="left:19px;top:19px" width="30" height="30" viewBox="0 0 30 30" fill="none" stroke="#d6d1c4" stroke-width="2.3" stroke-linecap="butt" stroke-linejoin="miter"><path d="M15 4v21.5M4.5 15l10.5 10.5L25.5 15"/></svg>
  </div>

  <!-- input box -->
  <div class="a" style="left:25px;top:1155px;width:630px;height:252px;border-radius:22px;background:#20201e;border:1.5px solid #2f2f2c;overflow:hidden">
    <div class="a" style="left:0;top:0;width:630px;height:70px;background:linear-gradient(90deg,#3b2c1f 0%,#362b22 45%,#2c2724 100%);border-bottom:2px solid #6f4420"></div>
    <div class="a" style="left:24px;top:20px;font-size:25.5px;color:#e48b3b;white-space:nowrap">30 credits</div>
    <div class="a" style="left:155px;top:32.5px;width:6px;height:6px;border-radius:3px;background:#c9c4b7"></div>
    <div class="a" style="left:178px;top:20px;font-size:24.5px;color:#cdc8bb;white-space:nowrap">1 credit/generation</div>
    <div class="a" style="left:24px;top:98px;font-size:27.8px;color:#7b7870;white-space:nowrap">Ask AI anything...</div>
    <svg class="a" style="left:37px;top:190px" width="24" height="26" viewBox="0 0 24 26"><polygon points="2,10 7.5,10 17,24 11.5,24" fill="#f4f2ec"/><polygon points="2,24 7.5,24 22,2 16.5,2" fill="#f4f2ec"/><rect x="18.2" y="4.7" width="4" height="19.3" fill="#f4f2ec"/></svg>
    <div class="a" style="left:73px;top:189px;font-size:23.5px;color:#cdc8bb;white-space:nowrap">Grok 4.1 Fast</div>
    <div class="a" style="left:549px;top:170px;width:64px;height:64px;border-radius:16px;background:#e38a38">
      <svg class="a" style="left:17px;top:17px" width="30" height="30" viewBox="0 0 30 30" fill="none" stroke="#fff6ea" stroke-width="2.6" stroke-linecap="round" stroke-linejoin="round"><path d="M24 4v9a5 5 0 0 1-5 5H6M11 12l-6 6 6 6"/></svg>
    </div>
  </div>
</div>

</div>
</body></html>
